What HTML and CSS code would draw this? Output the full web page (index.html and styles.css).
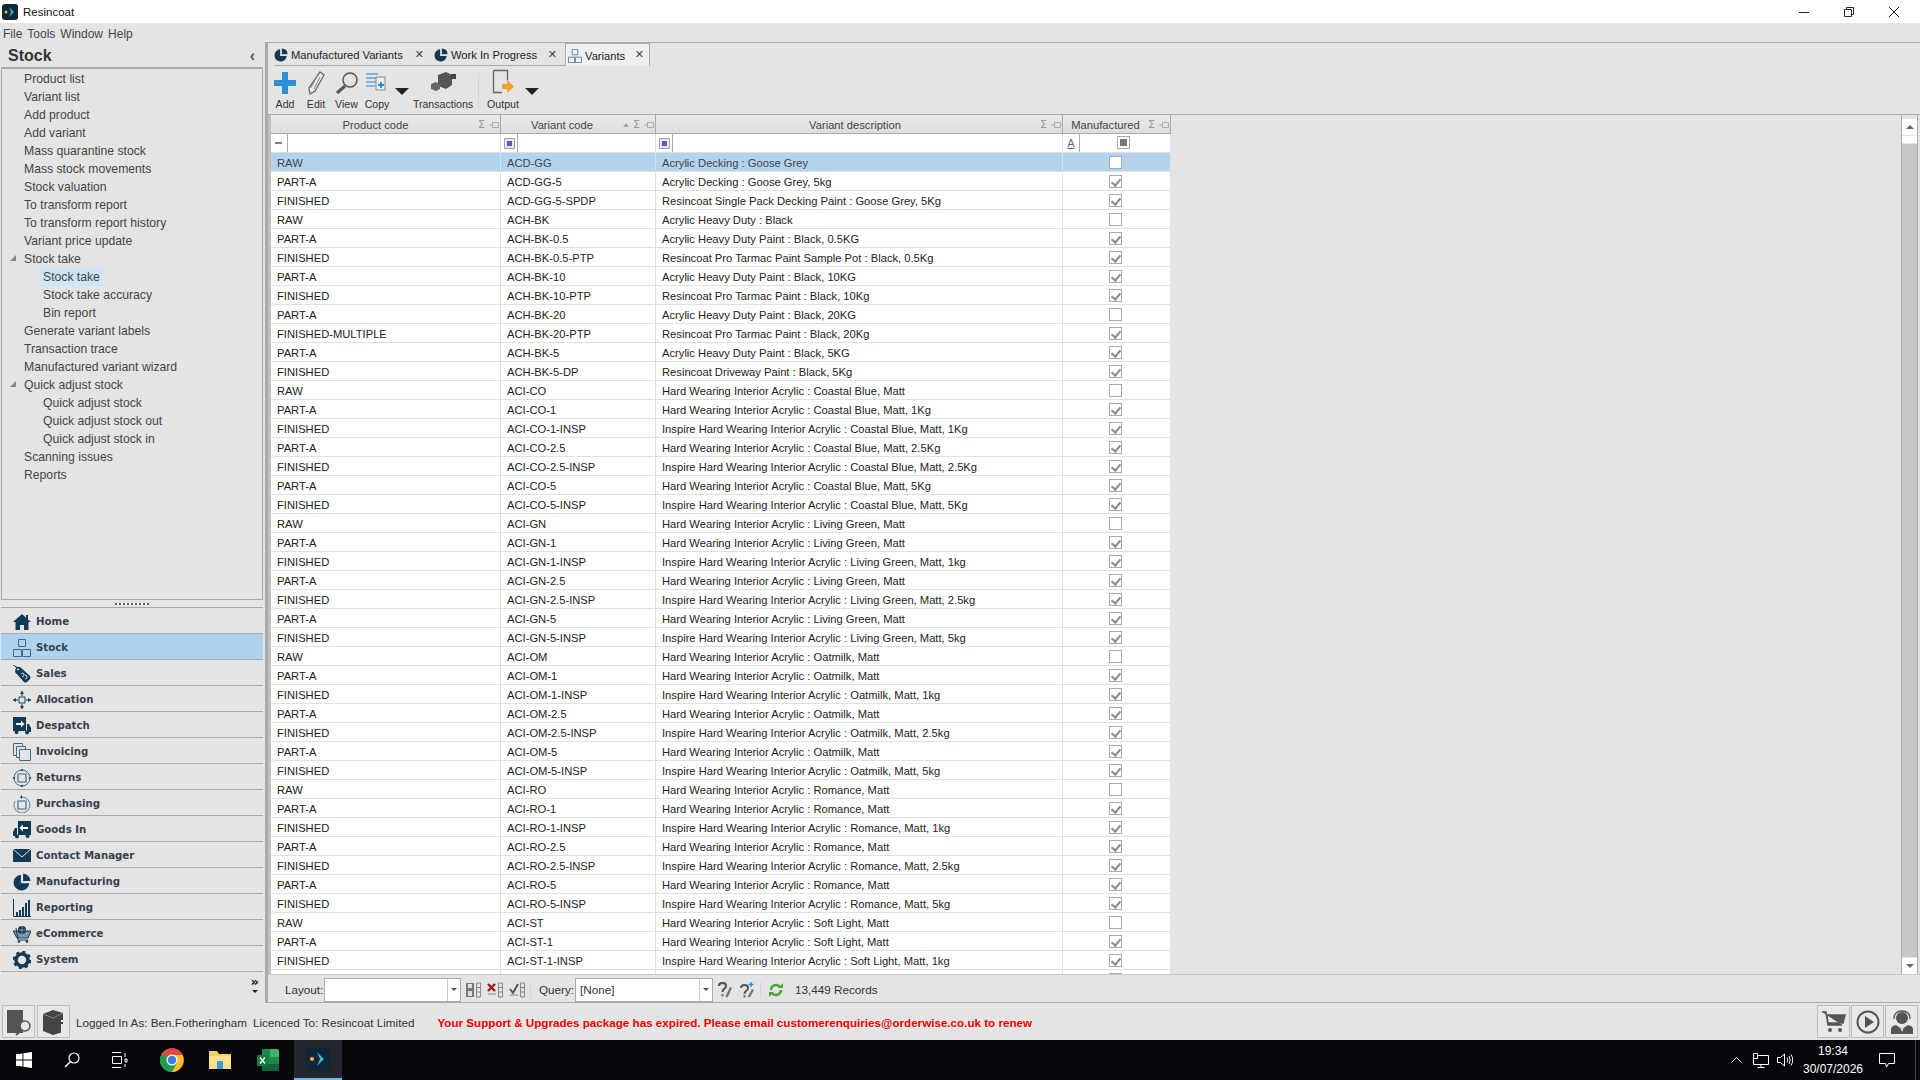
FILE: index.html
```html
<!DOCTYPE html>
<html>
	<head>
		<meta charset="UTF-8">
		<title>Resincoat</title>
		<link rel="stylesheet" href="styles.css">
	</head>
	<body>
		<svg class="defs" width="0" height="0">
			<symbol id="pie" viewBox="0 0 16 16"><path d="M7 1.500A7 7 0 1 0 14.500 9H7z" fill="#123a56"/><path d="M9 0.500A7 7 0 0 1 15.500 7H9z" fill="#123a56"/></symbol>
			<symbol id="boxes" viewBox="0 0 18 18"><path d="M5.500 .5h7v7h-7zM.5 10.500h8v7h-8zM9.500 10.500h8v7h-8z" fill="none" stroke="#3f6b8e"/></symbol>
			<symbol id="pin" viewBox="0 0 10 8"><path d="M3.500 1.500h6v5h-6zM0 4h3.500" fill="none" stroke="#aaa"/></symbol>
			<symbol id="blue" viewBox="0 0 11 11"><path d="M.5 .5h10v10H.5z" fill="#e8e8f6" stroke="#9a9ac8"/><path d="M3 3h5v5H3z" fill="#5a5ab8"/></symbol>
		</svg>

		<div class="titlebar">
			<svg class="applogo" width="16" height="16" viewBox="0 0 16 16"><rect width="16" height="16" rx="3" fill="#10263a"/><path d="M7 3l5 5-5 5 2-5z" fill="#35b6c4"/><circle cx="4" cy="8" r="1.500" fill="#f2b632"/></svg>
			<span class="apptitle">Resincoat</span>
			<div class="winbtns">
				<svg width="10" height="10" viewBox="0 0 10 10"><path d="M0 5.500h10" stroke="#222"/></svg>
				<svg width="10" height="10" viewBox="0 0 10 10"><path d="M.5 2.500h7v7h-7zM2.500 2.500v-2h7v7h-2" fill="none" stroke="#222"/></svg>
				<svg width="10" height="10" viewBox="0 0 10 10"><path d="M0 0l10 10M10 0L0 10" stroke="#222"/></svg>
			</div>
		</div>
		<div class="menubar"><span>File</span><span>Tools</span><span>Window</span><span>Help</span></div>

		<div class="app">
			<div class="sidebar">
				<div class="side-head"><span>Stock</span><i class="side-collapse">‹</i></div>
				<ul class="tree">
					<li>Product list</li>
					<li>Variant list</li>
					<li>Add product</li>
					<li>Add variant</li>
					<li>Mass quarantine stock</li>
					<li>Mass stock movements</li>
					<li>Stock valuation</li>
					<li>To transform report</li>
					<li>To transform report history</li>
					<li>Variant price update</li>
					<li class="open">Stock take</li>
					<li class="sub"><span class="current">Stock take</span></li>
					<li class="sub">Stock take accuracy</li>
					<li class="sub">Bin report</li>
					<li>Generate variant labels</li>
					<li>Transaction trace</li>
					<li>Manufactured variant wizard</li>
					<li class="open">Quick adjust stock</li>
					<li class="sub">Quick adjust stock</li>
					<li class="sub">Quick adjust stock out</li>
					<li class="sub">Quick adjust stock in</li>
					<li>Scanning issues</li>
					<li>Reports</li>
				</ul>
				<div class="splitter"><span></span></div>
				<div class="nav">
					<div class="nav-item"><svg viewBox="0 0 18 18"><path d="M9 1L0 9h2.500v8h4.500v-5h4v5h4.500V9H18l-3-2.600V2h-2v2.700z" fill="#123a56"/></svg>Home</div>
					<div class="nav-item active"><svg viewBox="0 0 18 18"><use href="#boxes"/></svg>Stock</div>
					<div class="nav-item"><svg viewBox="0 0 18 18"><path d="M0 0l5 3" stroke="#123a56"/><path d="M3 2l4 0 10 9q1 2 0 3l-3 3q-2 1-3 0L2 7z" fill="#123a56"/><circle cx="5" cy="4.500" r="1" fill="#e4e4e4"/><path d="M8 9q2-2 3 0t-2 3M12 10q2 0 2 2t-2 2" fill="none" stroke="#e4e4e4"/></svg>Sales</div>
					<div class="nav-item"><svg viewBox="0 0 18 18"><path d="M6 6h6v6H6z" fill="none" stroke="#123a56"/><path d="M9 0v5M9 13v5M0 9h5M13 9h5" stroke="#123a56"/><path d="M7 3l2-3 2 3zM7 15l2 3 2-3zM3 7l-3 2 3 2zM15 7l3 2-3 2z" fill="#123a56"/></svg>Allocation</div>
					<div class="nav-item"><svg viewBox="0 0 18 18"><path d="M0 0h13v14H0zM14 7h2l2 4v4h-4z" fill="#123a56"/><circle cx="3.500" cy="15" r="2" fill="#123a56"/><circle cx="14" cy="15.500" r="2" fill="#123a56"/><path d="M3 6h5V3.500L11.500 7 8 10.500V8H3z" fill="#fff"/></svg>Despatch</div>
					<div class="nav-item"><svg viewBox="0 0 18 18"><path d="M.5 .5h9v3M.5 .5v12h3M3.500 3.500h9v3M3.500 3.500v11h3M6.500 6.500h11v11h-11z" fill="#e4e4e4" stroke="#3f6b8e"/></svg>Invoicing</div>
					<div class="nav-item"><svg viewBox="0 0 18 18"><circle cx="9" cy="9" r="8" fill="none" stroke="#3f6b8e"/><path d="M5 5h8v8H5z" fill="none" stroke="#3f6b8e" stroke-width="1.200"/><path d="M9 0v2M9 16v2M0 9h2M16 9h2" stroke="#123a56" stroke-width="1.500"/></svg>Returns</div>
					<div class="nav-item"><svg viewBox="0 0 18 18"><path d="M9 2a8 8 0 1 1-7 4" fill="none" stroke="#5d7f99"/><path d="M5 6h8v8H5z" fill="none" stroke="#3f6b8e" stroke-width="1.200"/><path d="M9 0l-2 2 2 2z" fill="#123a56"/></svg>Purchasing</div>
					<div class="nav-item"><svg viewBox="0 0 18 18"><path d="M18 0H5v14h13zM4 7H2l-2 4v4h4z" fill="#123a56"/><circle cx="14.500" cy="15" r="2" fill="#123a56"/><circle cx="4" cy="15.500" r="2" fill="#123a56"/><path d="M15 6h-5V3.500L6.500 7l3.500 3.500V8h5z" fill="#fff"/></svg>Goods In</div>
					<div class="nav-item"><svg viewBox="0 0 18 18"><path d="M0 2h18v13H0z" fill="#123a56"/><path d="M0 2l9 8 9-8" fill="none" stroke="#e4e4e4"/></svg>Contact Manager</div>
					<div class="nav-item"><svg viewBox="0 0 18 18"><use href="#pie"/></svg>Manufacturing</div>
					<div class="nav-item"><svg viewBox="0 0 18 18"><path d="M.5 0v17.500H18" fill="none" stroke="#123a56"/><path d="M3 13h2v4H3zM6 11h2v6H6zM9 8h2v9H9zM12 4h2v13h-2zM15 1h2v16h-2z" fill="#123a56"/></svg>Reporting</div>
					<div class="nav-item"><svg viewBox="0 0 18 18"><path d="M0 6h18l-3 7H4zM5 15h10M3 3l2 12" fill="#7d97ab" stroke="#123a56"/><circle cx="9" cy="5" r="4" fill="#123a56"/><path d="M6 5h6M9 1v8" stroke="#9ab" stroke-width=".8"/><circle cx="6" cy="16.500" r="1.300" fill="#123a56"/><circle cx="14" cy="16.500" r="1.300" fill="#123a56"/></svg>eCommerce</div>
					<div class="nav-item"><svg viewBox="0 0 18 18"><circle cx="9" cy="9" r="6" fill="none" stroke="#123a56" stroke-width="3.500"/><circle cx="9" cy="9" r="8" fill="none" stroke="#123a56" stroke-width="2.500" stroke-dasharray="3 3.300"/></svg>System</div>
				</div>
				<div class="side-foot"><span>»</span><b></b></div>
			</div>

			<div class="main">
				<div class="tabs">
					<div class="tab t1"><svg width="14" height="14"><use href="#pie"/></svg><span>Manufactured Variants</span><i>✕</i></div>
					<div class="tab t2"><svg width="14" height="14"><use href="#pie"/></svg><span>Work In Progress</span><i>✕</i></div>
					<div class="tab t3 active"><svg width="14" height="14"><use href="#boxes"/></svg><span>Variants</span><i>✕</i></div>
				</div>
				<div class="toolbar">
					<div class="tool w-add"><svg width="22" height="24" viewBox="0 0 22 24"><path d="M8 1h6v8h8v6h-8v8H8v-8H0V9h8z" fill="#2e8fd8"/></svg>Add</div>
					<div class="tool w-edit"><svg width="18" height="24" viewBox="0 0 18 24"><path d="M13 1l4 3-9 16-5 3-1-6z" fill="#eee" stroke="#666" stroke-width="1.300"/><path d="M10 5l-6 12M13 6l-6 12" stroke="#888"/></svg>Edit</div>
					<div class="tool w-view"><svg width="24" height="24" viewBox="0 0 24 24"><circle cx="15" cy="9" r="7" fill="none" stroke="#555" stroke-width="1.500"/><path d="M10 15l-8 7" stroke="#555" stroke-width="3"/></svg>View</div>
					<div class="tool w-copy"><svg width="24" height="24" viewBox="0 0 24 24"><path d="M1 3h12M1 7h12M1 11h12M1 15h9" stroke="#7fb2dc" stroke-width="2"/><path d="M11 6h9v13h-9z" fill="#e8eef4" stroke="#888"/><path d="M15 11h2v2h2v2h-2v2h-2v-2h-2v-2h2z" fill="#2e8fd8"/></svg>Copy</div>
					<i class="tool-arrow"></i>
					<div class="tool w-trans"><svg width="28" height="24" viewBox="0 0 28 24"><path d="M9 4l8-3 6 3v10l-6 4-8-3z" fill="#555"/><path d="M2 13l5-2 4 2v5l-4 2-5-2z" fill="#666"/><path d="M22 3h5v5h-5z" fill="#444"/></svg>Transactions</div>
					<i class="tool-sep"></i>
					<div class="tool w-out"><svg width="24" height="26" viewBox="0 0 24 26"><path d="M2.500 1.500h14v10M11 23.500H2.500v-22" fill="none" stroke="#666" stroke-width="1.300"/><path d="M11 15h5v-4l7 6.500-7 6.500v-4h-5z" fill="#f0a030"/></svg>Output</div>
					<i class="tool-arrow"></i>
				</div>

				<div class="body">
					<div class="grid-pane">
						<div class="grid-scroll">
							<table class="grid">
								<colgroup><col class="c1"><col class="c2"><col class="c3"><col class="c4"></colgroup>
								<thead>
									<tr>
										<th class="h1">Product code<span class="marks"><i>Σ</i><svg width="10" height="8"><use href="#pin"/></svg></span></th>
										<th class="h2">Variant code<span class="marks"><b class="sorted"></b><i>Σ</i><svg width="10" height="8"><use href="#pin"/></svg></span></th>
										<th class="h3">Variant description<span class="marks"><i>Σ</i><svg width="10" height="8"><use href="#pin"/></svg></span></th>
										<th class="h4">Manufactured<span class="marks"><i>Σ</i><svg width="10" height="8"><use href="#pin"/></svg></span></th>
									</tr>
									<tr class="filter">
										<td><span class="fbtn"><b class="minus"></b></span></td>
										<td><span class="fbtn"><svg width="11" height="11"><use href="#blue"/></svg></span></td>
										<td><span class="fbtn"><svg width="11" height="11"><use href="#blue"/></svg></span></td>
										<td class="fcheck"><span class="fbtn fa">A</span><span class="cb mixed"></span></td>
									</tr>
								</thead>
								<tbody>
									<tr class="selected"><td>RAW</td><td>ACD-GG</td><td>Acrylic Decking : Goose Grey</td><td><span class="cb"></span></td></tr>
									<tr><td>PART-A</td><td>ACD-GG-5</td><td>Acrylic Decking : Goose Grey, 5kg</td><td><span class="cb on"></span></td></tr>
									<tr><td>FINISHED</td><td>ACD-GG-5-SPDP</td><td>Resincoat Single Pack Decking Paint : Goose Grey, 5Kg</td><td><span class="cb on"></span></td></tr>
									<tr><td>RAW</td><td>ACH-BK</td><td>Acrylic Heavy Duty : Black</td><td><span class="cb"></span></td></tr>
									<tr><td>PART-A</td><td>ACH-BK-0.5</td><td>Acrylic Heavy Duty Paint : Black, 0.5KG</td><td><span class="cb on"></span></td></tr>
									<tr><td>FINISHED</td><td>ACH-BK-0.5-PTP</td><td>Resincoat Pro Tarmac Paint Sample Pot : Black, 0.5Kg</td><td><span class="cb on"></span></td></tr>
									<tr><td>PART-A</td><td>ACH-BK-10</td><td>Acrylic Heavy Duty Paint : Black, 10KG</td><td><span class="cb on"></span></td></tr>
									<tr><td>FINISHED</td><td>ACH-BK-10-PTP</td><td>Resincoat Pro Tarmac Paint : Black, 10Kg</td><td><span class="cb on"></span></td></tr>
									<tr><td>PART-A</td><td>ACH-BK-20</td><td>Acrylic Heavy Duty Paint : Black, 20KG</td><td><span class="cb"></span></td></tr>
									<tr><td>FINISHED-MULTIPLE</td><td>ACH-BK-20-PTP</td><td>Resincoat Pro Tarmac Paint : Black, 20Kg</td><td><span class="cb on"></span></td></tr>
									<tr><td>PART-A</td><td>ACH-BK-5</td><td>Acrylic Heavy Duty Paint : Black, 5KG</td><td><span class="cb on"></span></td></tr>
									<tr><td>FINISHED</td><td>ACH-BK-5-DP</td><td>Resincoat Driveway Paint : Black, 5Kg</td><td><span class="cb on"></span></td></tr>
									<tr><td>RAW</td><td>ACI-CO</td><td>Hard Wearing Interior Acrylic : Coastal Blue, Matt</td><td><span class="cb"></span></td></tr>
									<tr><td>PART-A</td><td>ACI-CO-1</td><td>Hard Wearing Interior Acrylic : Coastal Blue, Matt, 1Kg</td><td><span class="cb on"></span></td></tr>
									<tr><td>FINISHED</td><td>ACI-CO-1-INSP</td><td>Inspire Hard Wearing Interior Acrylic : Coastal Blue, Matt, 1Kg</td><td><span class="cb on"></span></td></tr>
									<tr><td>PART-A</td><td>ACI-CO-2.5</td><td>Hard Wearing Interior Acrylic : Coastal Blue, Matt, 2.5Kg</td><td><span class="cb on"></span></td></tr>
									<tr><td>FINISHED</td><td>ACI-CO-2.5-INSP</td><td>Inspire Hard Wearing Interior Acrylic : Coastal Blue, Matt, 2.5Kg</td><td><span class="cb on"></span></td></tr>
									<tr><td>PART-A</td><td>ACI-CO-5</td><td>Hard Wearing Interior Acrylic : Coastal Blue, Matt, 5Kg</td><td><span class="cb on"></span></td></tr>
									<tr><td>FINISHED</td><td>ACI-CO-5-INSP</td><td>Inspire Hard Wearing Interior Acrylic : Coastal Blue, Matt, 5Kg</td><td><span class="cb on"></span></td></tr>
									<tr><td>RAW</td><td>ACI-GN</td><td>Hard Wearing Interior Acrylic : Living Green, Matt</td><td><span class="cb"></span></td></tr>
									<tr><td>PART-A</td><td>ACI-GN-1</td><td>Hard Wearing Interior Acrylic : Living Green, Matt</td><td><span class="cb on"></span></td></tr>
									<tr><td>FINISHED</td><td>ACI-GN-1-INSP</td><td>Inspire Hard Wearing Interior Acrylic : Living Green, Matt, 1kg</td><td><span class="cb on"></span></td></tr>
									<tr><td>PART-A</td><td>ACI-GN-2.5</td><td>Hard Wearing Interior Acrylic : Living Green, Matt</td><td><span class="cb on"></span></td></tr>
									<tr><td>FINISHED</td><td>ACI-GN-2.5-INSP</td><td>Inspire Hard Wearing Interior Acrylic : Living Green, Matt, 2.5kg</td><td><span class="cb on"></span></td></tr>
									<tr><td>PART-A</td><td>ACI-GN-5</td><td>Hard Wearing Interior Acrylic : Living Green, Matt</td><td><span class="cb on"></span></td></tr>
									<tr><td>FINISHED</td><td>ACI-GN-5-INSP</td><td>Inspire Hard Wearing Interior Acrylic : Living Green, Matt, 5kg</td><td><span class="cb on"></span></td></tr>
									<tr><td>RAW</td><td>ACI-OM</td><td>Hard Wearing Interior Acrylic : Oatmilk, Matt</td><td><span class="cb"></span></td></tr>
									<tr><td>PART-A</td><td>ACI-OM-1</td><td>Hard Wearing Interior Acrylic : Oatmilk, Matt</td><td><span class="cb on"></span></td></tr>
									<tr><td>FINISHED</td><td>ACI-OM-1-INSP</td><td>Inspire Hard Wearing Interior Acrylic : Oatmilk, Matt, 1kg</td><td><span class="cb on"></span></td></tr>
									<tr><td>PART-A</td><td>ACI-OM-2.5</td><td>Hard Wearing Interior Acrylic : Oatmilk, Matt</td><td><span class="cb on"></span></td></tr>
									<tr><td>FINISHED</td><td>ACI-OM-2.5-INSP</td><td>Inspire Hard Wearing Interior Acrylic : Oatmilk, Matt, 2.5kg</td><td><span class="cb on"></span></td></tr>
									<tr><td>PART-A</td><td>ACI-OM-5</td><td>Hard Wearing Interior Acrylic : Oatmilk, Matt</td><td><span class="cb on"></span></td></tr>
									<tr><td>FINISHED</td><td>ACI-OM-5-INSP</td><td>Inspire Hard Wearing Interior Acrylic : Oatmilk, Matt, 5kg</td><td><span class="cb on"></span></td></tr>
									<tr><td>RAW</td><td>ACI-RO</td><td>Hard Wearing Interior Acrylic : Romance, Matt</td><td><span class="cb"></span></td></tr>
									<tr><td>PART-A</td><td>ACI-RO-1</td><td>Hard Wearing Interior Acrylic : Romance, Matt</td><td><span class="cb on"></span></td></tr>
									<tr><td>FINISHED</td><td>ACI-RO-1-INSP</td><td>Inspire Hard Wearing Interior Acrylic : Romance, Matt, 1kg</td><td><span class="cb on"></span></td></tr>
									<tr><td>PART-A</td><td>ACI-RO-2.5</td><td>Hard Wearing Interior Acrylic : Romance, Matt</td><td><span class="cb on"></span></td></tr>
									<tr><td>FINISHED</td><td>ACI-RO-2.5-INSP</td><td>Inspire Hard Wearing Interior Acrylic : Romance, Matt, 2.5kg</td><td><span class="cb on"></span></td></tr>
									<tr><td>PART-A</td><td>ACI-RO-5</td><td>Hard Wearing Interior Acrylic : Romance, Matt</td><td><span class="cb on"></span></td></tr>
									<tr><td>FINISHED</td><td>ACI-RO-5-INSP</td><td>Inspire Hard Wearing Interior Acrylic : Romance, Matt, 5kg</td><td><span class="cb on"></span></td></tr>
									<tr><td>RAW</td><td>ACI-ST</td><td>Hard Wearing Interior Acrylic : Soft Light, Matt</td><td><span class="cb"></span></td></tr>
									<tr><td>PART-A</td><td>ACI-ST-1</td><td>Hard Wearing Interior Acrylic : Soft Light, Matt</td><td><span class="cb on"></span></td></tr>
									<tr><td>FINISHED</td><td>ACI-ST-1-INSP</td><td>Inspire Hard Wearing Interior Acrylic : Soft Light, Matt, 1kg</td><td><span class="cb on"></span></td></tr>
									<tr><td></td><td></td><td></td><td><span class="cb on"></span></td></tr>
								</tbody>
							</table>
						</div>
						<div class="vscroll">
							<div class="sb-btn"><b class="up"></b></div>
							<div class="sb-thumb"></div>
							<div class="sb-track"></div>
							<div class="sb-btn"><b class="down"></b></div>
						</div>
					</div>
					<div class="gridbar">
						<label class="l-layout">Layout:</label>
						<div class="combo c-layout"><span></span><b></b></div>
						<svg class="bi" width="16" height="16" viewBox="0 0 16 16"><path d="M1 1h8v14H1z" fill="#777"/><path d="M3 2h4v4H3zM3 9h4v5H3z" fill="#ddd"/><path d="M11.500 1h4v14h-4zM11.500 5.500h4M11.500 10h4" fill="none" stroke="#888"/></svg>
						<svg class="bi" width="16" height="16" viewBox="0 0 16 16"><path d="M1 2l7 7M8 2L1 9" stroke="#a01818" stroke-width="2.400"/><path d="M1 12h8M11.500 1h4v14h-4zM11.500 5.500h4M11.500 10h4" fill="none" stroke="#888"/></svg>
						<svg class="bi" width="16" height="16" viewBox="0 0 16 16"><path d="M1 7l3 4 5-9" fill="none" stroke="#555" stroke-width="2"/><path d="M1 13h8M11.500 1h4v14h-4zM11.500 5.500h4M11.500 10h4" fill="none" stroke="#888"/></svg>
						<i class="bar-sep"></i>
						<label class="l-query">Query:</label>
						<div class="combo c-query"><span>[None]</span><b></b></div>
						<svg class="bi" width="16" height="16" viewBox="0 0 16 16"><path d="M2 4q0-3 3.500-3T9 4q0 2-2 3-1.500 1-1.500 3" fill="none" stroke="#555" stroke-width="2.200"/><path d="M4.500 12h2v2.500h-2zM13 5l2 1-4 9-2 .5V13z" fill="#777"/></svg>
						<svg class="bi" width="16" height="16" viewBox="0 0 16 16"><path d="M2 6q0-3 3.500-3T9 6q0 2-2 3-1.500 1-1.500 3" fill="none" stroke="#555" stroke-width="2"/><path d="M4.500 13h2v2.500h-2zM13 7l2 1-4 7-2 .5V14z" fill="#777"/><path d="M12 0v5M9.500 2.500h5" stroke="#2e8fd8" stroke-width="1.400"/></svg>
						<i class="bar-sep sep2"></i>
						<svg class="bi" width="14" height="14" viewBox="0 0 14 14"><path d="M2 7a5 5 0 0 1 9-3M12 7a5 5 0 0 1-9 3" fill="none" stroke="#4aa63c" stroke-width="2.400"/><path d="M9 5h5V0zM5 9H0v5z" fill="#4aa63c"/></svg>
						<span class="records">13,449 Records</span>
					</div>
				</div>
			</div>
		</div>

		<div class="statusbar">
			<div class="sbtn"><svg width="28" height="28" viewBox="0 0 28 28"><path d="M2 2h16v23H2z" fill="#555"/><circle cx="20" cy="18" r="5" fill="#e8e8e8" stroke="#555" stroke-width="1.500"/><path d="M17 22l-6 5" stroke="#555" stroke-width="2"/></svg></div>
			<div class="sbtn"><svg width="26" height="26" viewBox="0 0 26 26"><path d="M12 1l10 3v19l-10 3-10-4V5z" fill="#444"/><path d="M2 5l10 4 10-5" fill="none" stroke="#888"/><path d="M20 11h3v2h-3zM20 15h3v9h-3z" fill="#e8e8e8"/></svg></div>
			<span class="login">Logged In As: Ben.Fotheringham</span>
			<span class="licence">Licenced To: Resincoat Limited</span>
			<span class="expired">Your Support &amp; Upgrades package has expired. Please email customerenquiries@orderwise.co.uk to renew</span>
			<div class="status-right">
				<div class="sbtn"><svg width="24" height="24" viewBox="0 0 24 24"><path d="M0 2h4l2 13h14M5 5h18l-2 8H6z" fill="#555" stroke="#555" stroke-width="1.500"/><circle cx="8" cy="20" r="2" fill="#555"/><circle cx="18" cy="20" r="2" fill="#555"/></svg></div>
				<div class="sbtn"><svg width="24" height="24" viewBox="0 0 24 24"><circle cx="12" cy="12" r="10.500" fill="none" stroke="#555" stroke-width="2"/><path d="M9 6l9 6-9 6z" fill="#555"/></svg></div>
				<div class="sbtn"><svg width="24" height="24" viewBox="0 0 24 24"><circle cx="12" cy="8" r="6" fill="#555"/><path d="M4 9q0-8 8-8t8 8" fill="none" stroke="#555" stroke-width="1.300"/><path d="M1 24v-5q0-3 5-4l6 4 6-4q5 1 5 4v5z" fill="#555"/><path d="M10 17l2 2 2-2-2 5z" fill="#e8e8e8"/></svg></div>
			</div>
		</div>

		<div class="taskbar">
			<svg class="tb-start" width="16" height="16" viewBox="0 0 16 16"><path d="M0 2.300l6.500-.9v6.100H0zM7.400 1.300L16 0v7.500H7.400zM0 8.500h6.500v6.100L0 13.700zM7.400 8.500H16V16l-8.600-1.300z" fill="#fff"/></svg>
			<svg class="tb-search" width="16" height="16" viewBox="0 0 16 16"><circle cx="10" cy="6" r="5" fill="none" stroke="#fff" stroke-width="1.200"/><path d="M6.500 9.500L1 15" stroke="#fff" stroke-width="1.400"/></svg>
			<svg class="tb-view" width="17" height="16" viewBox="0 0 17 16"><path d="M1 .5h9M1 15.500h9M1.500 4.500h9v7h-9zM14 1v4M14 7h2v3h-2zM14 12v3" fill="none" stroke="#fff"/></svg>
			<svg class="tb-chrome" width="24" height="24" viewBox="0 0 24 24"><circle cx="12" cy="12" r="12" fill="#dd4b3e"/><path d="M12 12L1.600 6A12 12 0 0 0 12 24l5-8z" fill="#1f9e4f"/><path d="M12 7h10.500A12 12 0 0 1 12 24l5-9z" fill="#fbc02d"/><circle cx="12" cy="12" r="5.500" fill="#fff"/><circle cx="12" cy="12" r="4.300" fill="#3b7de0"/></svg>
			<svg class="tb-files" width="22" height="20" viewBox="0 0 22 20"><path d="M0 1h8l2 3h12v15H0z" fill="#f5cf62"/><path d="M0 6h22v13H0z" fill="#fbe08c"/><path d="M8 11h6v8H8z" fill="#3d9bd8"/></svg>
			<svg class="tb-excel" width="22" height="24" viewBox="0 0 22 24"><path d="M5 1h15a2 2 0 0 1 2 2v18a2 2 0 0 1-2 2H5z" fill="#1f8a4c"/><path d="M13 1h7a2 2 0 0 1 2 2v6h-9z" fill="#43b36b"/><path d="M5 16h17v7H5z" fill="#14623a"/><rect y="7" width="11" height="11" rx="1" fill="#107c41"/><path d="M3 9.500l5 6M8 9.500l-5 6" stroke="#fff" stroke-width="1.300"/></svg>
			<div class="tb-active"><svg width="24" height="24" viewBox="0 0 24 24"><rect width="24" height="24" rx="5" fill="#10263a"/><path d="M11 5l7 7-7 7 3-7z" fill="#35b6c4"/><circle cx="6" cy="12" r="2" fill="#f2b632"/></svg></div>
			<div class="tray">
				<svg class="tr-up" width="11" height="6" viewBox="0 0 11 6"><path d="M.5 5.500l5-5 5 5" fill="none" stroke="#fff"/></svg>
				<svg class="tr-net" width="16" height="15" viewBox="0 0 16 15"><path d="M.5 .5h4v5h-4zM4.500 2.500h11v9H.5v-6M8 11.500v3M4.500 14.500h7" fill="none" stroke="#fff"/></svg>
				<svg class="tr-vol" width="16" height="14" viewBox="0 0 16 14"><path d="M.5 4.500h3l4-3.500v12l-4-3.500h-3zM10 4.500q1.500 2.500 0 5M12 3q2.500 4 0 8M14 1.500q3.500 5.500 0 11" fill="none" stroke="#fff"/></svg>
				<div class="clock"><span>19:34</span><span>30/07/2026</span></div>
				<svg class="tr-note" width="16" height="15" viewBox="0 0 16 15"><path d="M.5 .5h15v10H9.500L7.500 14l-1-3.500h-6z" fill="none" stroke="#fff"/></svg>
				<i class="tr-show"></i>
			</div>
		</div>
	</body>
</html>
```

FILE: styles.css
```css
html,body{
	margin: 0;
	height: 100%;
	overflow: hidden;
}
body{
	width: 1920px;
	height: 1080px;
	display: flex;
	flex-direction: column;
	background: #e4e4e4;
	font: 12px "Liberation Sans", Arial, sans-serif;
	color: #111;
}
.defs{
	position: absolute;
}
svg{
	display: block;
	flex: none;
}

/* title + menu */
.titlebar{
	height: 23px;
	background: #fff;
	display: flex;
	align-items: center;
	padding-left: 2px;
}
.apptitle{
	margin-left: 5px;
	font-size: 11.5px;
}
.winbtns{
	margin-left: auto;
	display: flex;
	gap: 35px;
	padding-right: 21px;
}
.menubar{
	height: 20px;
	display: flex;
	align-items: center;
	gap: 5px;
	padding: 2px 0 0 3px;
	box-sizing: border-box;
	color: #444;
}

.app{
	flex: 1;
	display: flex;
	min-height: 0;
}

/* left panel */
.sidebar{
	width: 265px;
	flex: none;
	display: flex;
	flex-direction: column;
}
.side-head{
	height: 24px;
	display: flex;
	align-items: center;
	justify-content: space-between;
	padding: 2px 10px 0 8px;
	box-sizing: border-box;
	font: bold 16px "Liberation Sans", Arial, sans-serif;
	color: #333;
}
.side-collapse{
	font: bold 16px "Liberation Sans", sans-serif;
	color: #555;
}
.tree{
	list-style: none;
	margin: 0 2px 0 1px;
	padding: 1px 0 0;
	height: 533px;
	box-sizing: border-box;
	border: 1px solid #aaa;
	border-top: 2px solid #aaa;
	color: #444;
	font-size: 12.2px;
}
.tree li{
	height: 18px;
	line-height: 18px;
	padding-left: 22px;
	position: relative;
}
.tree li.sub{
	padding-left: 41px;
}
.tree li.open::before{
	content: "";
	position: absolute;
	left: 8px;
	top: 5px;
	border-left: 6px solid transparent;
	border-bottom: 6px solid #888;
}
.current{
	display: inline-block;
	background: #cfe5f7;
	padding: 0 3px;
	margin-left: -3px;
}
.splitter{
	height: 8px;
	box-sizing: border-box;
	display: flex;
	justify-content: center;
	align-items: center;
	border-bottom: 1px solid #aaa;
	margin: 0 2px 0 1px;
}
.splitter span{
	width: 34px;
	height: 2px;
	background: repeating-linear-gradient(90deg, #555 0 2px, #fff 2px 4px);
}
.nav{
	margin: 0 2px 0 1px;
}
.nav-item{
	height: 26px;
	box-sizing: border-box;
	padding: 2px 0 0 12px;
	border-bottom: 1px solid #aaa;
	display: flex;
	align-items: center;
	gap: 5px;
	font: bold 10.2px "DejaVu Sans", Verdana, sans-serif;
	color: #36414e;
}
.nav-item svg{
	width: 18px;
	height: 18px;
}
.nav-item.active{
	background: #afd3ee;
}
.side-foot{
	flex: 1;
	display: flex;
	flex-direction: column;
	align-items: flex-end;
	padding: 2px 6px 0 0;
	font: bold 13px/12px "DejaVu Sans", sans-serif;
}
.side-foot span{
	margin-top: 2px;
}
.side-foot b{
	margin: 2px 1px 0 0;
	border-left: 3px solid transparent;
	border-right: 3px solid transparent;
	border-top: 3px solid #222;
}

/* right panel */
.main{
	flex: 1;
	min-width: 0;
	display: flex;
	flex-direction: column;
	margin-top: -1px;
	border-left: 1px solid #aaa;
	border-top: 1px solid #aaa;
	font-size: 11.2px;
}
.tabs{
	height: 23px;
	display: flex;
	align-items: flex-end;
	padding-left: 6px;
	border-left: 2px solid #aaa;
}
.tab{
	height: 22px;
	display: flex;
	align-items: center;
	gap: 3px;
	padding-top: 1px;
	box-sizing: border-box;
	color: #222;
	border-bottom: 1px solid #aaa;
	position: relative;
}
.tab i{
	position: absolute;
	top: 4px;
	font: normal 11px "DejaVu Sans", sans-serif;
	color: #444;
}
.t1{
	width: 160px;
}
.t1 i{
	right: 10px;
}
.t2{
	width: 131px;
}
.t2 i{
	right: 8px;
}
.t3{
	width: 85px;
	padding-left: 2px;
}
.t3 i{
	right: 5px;
}
.tab.active{
	border: 1px solid #aaa;
	border-bottom: none;
	background: #efefef;
	height: 23px;
}
.toolbar{
	height: 48px;
	display: flex;
	align-items: flex-start;
	border-left: 2px solid #aaa;
	padding-left: 3px;
	color: #333;
	font-size: 10.6px;
}
.tool{
	display: flex;
	flex-direction: column;
	align-items: center;
	justify-content: flex-end;
	height: 45px;
	line-height: 14px;
	gap: 2px;
}
.w-add{
	width: 28px;
}
.w-edit{
	width: 34px;
}
.w-view{
	width: 27px;
}
.w-copy{
	width: 34px;
}
.w-trans{
	width: 60px;
	margin-left: 4px;
}
.w-out{
	width: 42px;
	margin-left: 3px;
}
.tool-arrow{
	width: 0;
	height: 0;
	margin: 22px 0 0 1px;
	border-left: 7px solid transparent;
	border-right: 7px solid transparent;
	border-top: 7px solid #222;
}
.tool-sep{
	width: 1px;
	height: 34px;
	margin: 8px 0 0 5px;
	background: #d4d4d4;
}
.body{
	flex: 1;
	min-height: 0;
	display: flex;
	flex-direction: column;
	border-left: 2px solid #aaa;
}
.grid-pane{
	flex: 1;
	min-height: 0;
	display: flex;
	border-top: 1px solid #aaa;
	border-bottom: 1px solid #c8c8c8;
}
.grid-scroll{
	flex: 1;
	min-width: 0;
	overflow: hidden;
	border-left: 3px solid #c0c0c0;
}

/* table */
.grid{
	table-layout: fixed;
	border-collapse: separate;
	border-spacing: 0;
	width: 900px;
	background: #fff;
}
.c1{
	width: 230px;
}
.c2{
	width: 155px;
}
.c3{
	width: 407px;
}
.c4{
	width: 108px;
}
.grid th{
	height: 19px;
	padding: 1px 0 0;
	box-sizing: border-box;
	background: linear-gradient(#e9e9e9, #dedede);
	border-right: 1px solid #aaa;
	border-bottom: 1px solid #aaa;
	font-weight: normal;
	color: #444;
	position: relative;
}
.grid th.h1{
	padding-right: 20px;
}
.grid th.h2{
	padding-right: 32px;
}
.grid th.h3{
	padding-right: 8px;
}
.grid th.h4{
	padding-right: 22px;
}
.marks{
	position: absolute;
	right: 1px;
	top: 3px;
	display: flex;
	align-items: center;
	gap: 4px;
	color: #999;
}
.marks i{
	font: normal 11px "DejaVu Sans", sans-serif;
}
.sorted{
	width: 0;
	height: 0;
	border-left: 3px solid transparent;
	border-right: 3px solid transparent;
	border-bottom: 4px solid #aaa;
}
.filter td{
	height: 18px;
	padding: 0;
	border-right: 1px solid #e0e0e0;
	border-bottom: 1px solid #e0e0e0;
}
.fbtn{
	float: left;
	width: 17px;
	height: 18px;
	box-sizing: border-box;
	border-right: 1px solid #aaa;
	display: flex;
	align-items: center;
	justify-content: center;
}
.minus{
	width: 7px;
	height: 2px;
	margin-right: 1px;
	background: #7b7bb4;
}
.fa{
	font-size: 11px;
	color: #5a5ab8;
	text-decoration: underline;
}
.fcheck .cb{
	margin: 2px 0 0 54px;
}
tbody td{
	height: 17px;
	padding: 1px 0 0 6px;
	border-right: 1px solid #e0e0e0;
	border-bottom: 1px solid #e0e0e0;
	white-space: nowrap;
	overflow: hidden;
	color: #222;
}
tbody td:last-child{
	padding: 1px 0 0 46px;
}
tr.selected td{
	background: #b2d4ef;
	color: #444;
	border-right-color: #cfe3f4;
}
tbody .cb{
	margin-top: -1px;
}
.cb{
	display: block;
	width: 13px;
	height: 13px;
	box-sizing: border-box;
	border: 1px solid #aaa;
	background: #fff;
	position: relative;
}
.cb.on::after{
	content: "";
	position: absolute;
	left: 3px;
	top: 1px;
	width: 4px;
	height: 7px;
	border-right: 2px solid #8a8a8a;
	border-bottom: 2px solid #8a8a8a;
	transform: rotate(40deg);
}
.cb.mixed::after{
	content: "";
	position: absolute;
	left: 2px;
	top: 2px;
	width: 7px;
	height: 7px;
	background: #777;
}

/* scrollbar */
.vscroll{
	width: 17px;
	flex: none;
	margin-right: 2px;
	border-left: 1px solid #aaa;
	border-right: 1px solid #aaa;
	display: flex;
	flex-direction: column;
	gap: 1px;
	padding-top: 4px;
	box-sizing: border-box;
	background: #e4e4e4;
}
.sb-btn{
	height: 16px;
	background: #fff;
	display: flex;
	align-items: center;
	justify-content: center;
}
.sb-btn b{
	width: 0;
	height: 0;
	border-left: 4px solid transparent;
	border-right: 4px solid transparent;
}
.up{
	border-bottom: 4px solid #666;
}
.down{
	border-top: 4px solid #666;
}
.sb-thumb{
	height: 7px;
	flex: none;
	background: #fff;
}
.sb-track{
	flex: 1;
	background: #c8c8c8;
}

/* layout / query bar */
.gridbar{
	height: 28px;
	flex: none;
	box-sizing: border-box;
	display: flex;
	align-items: center;
	padding: 2px 0 0 17px;
	color: #333;
	border-bottom: 1px solid #aaa;
	font-size: 11.7px;
}
.combo{
	height: 24px;
	box-sizing: border-box;
	border: 1px solid #aaa;
	background: #fff;
	display: flex;
	align-items: center;
	position: relative;
}
.combo span{
	padding-left: 4px;
}
.combo b{
	position: absolute;
	right: 0;
	top: 0;
	bottom: 0;
	width: 12px;
	border-left: 1px solid #ccc;
}
.combo b::after{
	content: "";
	position: absolute;
	left: 3px;
	top: 9px;
	border-left: 3px solid transparent;
	border-right: 3px solid transparent;
	border-top: 3px solid #555;
}
.l-layout{
	width: 39px;
}
.c-layout{
	width: 137px;
	margin-right: -2px;
}
.gridbar .bi{
	margin-left: 6px;
}
.bar-sep{
	width: 1px;
	height: 16px;
	margin: 0 8px 0 5px;
	background: #d4d4d4;
}
.sep2{
	margin-right: 2px;
}
.l-query{
	width: 36px;
}
.c-query{
	width: 138px;
	margin-right: -2px;
}
.records{
	margin-left: 12px;
}

/* status */
.statusbar{
	height: 37px;
	flex: none;
	display: flex;
	align-items: center;
	padding-left: 2px;
	gap: 2px;
	color: #333;
	font-size: 11.7px;
}
.statusbar > span{
	margin-top: 2px;
}
.sbtn{
	width: 33px;
	height: 33px;
	box-sizing: border-box;
	border: 1px solid #bbb;
	background: #e8e8e8;
	display: flex;
	align-items: center;
	justify-content: center;
}
.login{
	margin-left: 4px;
}
.licence{
	margin-left: 4px;
}
.expired{
	margin-left: 21px;
	font-weight: bold;
	font-size: 11.65px;
	color: #f00000;
}
.status-right{
	margin-left: auto;
	margin-right: 2px;
	display: flex;
	gap: 1px;
}

/* taskbar */
.taskbar{
	height: 40px;
	flex: none;
	background: #05070c;
	display: flex;
	align-items: center;
	color: #fff;
}
.tb-start{
	margin-left: 16px;
}
.tb-search{
	margin-left: 32px;
}
.tb-view{
	margin-left: 31px;
}
.tb-chrome{
	margin-left: 32px;
}
.tb-files{
	margin-left: 25px;
}
.tb-excel{
	margin-left: 26px;
}
.tb-active{
	width: 48px;
	height: 40px;
	box-sizing: border-box;
	margin-left: 15px;
	background: #23262c;
	border-bottom: 2px solid #76b9ed;
	display: flex;
	align-items: center;
	justify-content: center;
}
.tray{
	margin-left: auto;
	height: 100%;
	display: flex;
	align-items: center;
}
.tr-net{
	margin-left: 11px;
}
.tr-vol{
	margin-left: 8px;
}
.clock{
	width: 76px;
	margin-left: 2px;
	display: flex;
	flex-direction: column;
	align-items: center;
	line-height: 18px;
}
.tr-note{
	margin: 0 20px 0 8px;
}
.tr-show{
	width: 1px;
	height: 100%;
	margin-right: 4px;
	background: #444;
}
```
